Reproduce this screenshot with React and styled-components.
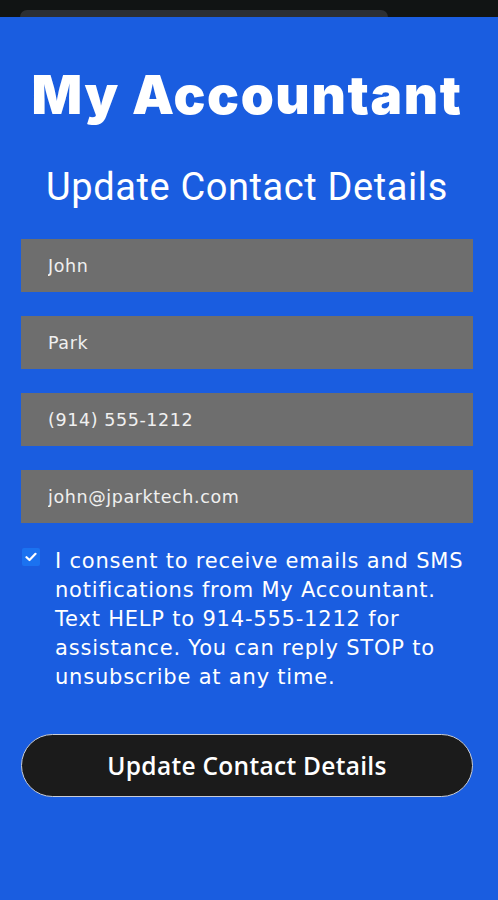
import React, { useState } from "react";
import styled, { createGlobalStyle } from "styled-components";

const Global = createGlobalStyle`
  html, body { margin: 0; padding: 0; background: #1a5de0; }
  * { box-sizing: border-box; }
`;

const Page = styled.div`
  min-height: 900px;
  background: #1a5de0;
  display: flex;
  flex-direction: column;
`;

const Chrome = styled.div`
  height: 17px;
  background: #111414;
  padding: 10px 0 0 20px;
  display: flex;
`;

const ChromeTab = styled.div`
  width: 368px;
  height: 7px;
  background: #2c2f33;
  border-radius: 14px 14px 0 0;
`;

const Main = styled.main`
  display: flex;
  flex-direction: column;
  padding: 0 25px 0 21px;
`;

const Brand = styled.h1`
  margin: 46px 0 0;
  text-align: center;
  font-family: "Inter", "Noto Sans", sans-serif;
  font-weight: 900;
  font-size: 53px;
  line-height: 64px;
  color: #ffffff;
  letter-spacing: 1.6px;
`;

const Title = styled.h2`
  margin: 38px 0 0;
  text-align: center;
  font-family: "Roboto", sans-serif;
  font-weight: 400;
  font-size: 38px;
  line-height: 44px;
  color: #ffffff;
  letter-spacing: 0.6px;
`;

const Form = styled.form`
  display: flex;
  flex-direction: column;
  gap: 24px;
  margin-top: 30px;
`;

const Field = styled.input`
  height: 53px;
  width: 100%;
  border: none;
  outline: none;
  background: #6e6e6e;
  color: #f0f0f0;
  padding: 0 0 0 27px;
  font-family: "DejaVu Sans", sans-serif;
  font-size: 17.5px;
  letter-spacing: 0.6px;
`;

const Consent = styled.label`
  display: flex;
  gap: 15px;
  align-items: flex-start;
  margin-top: 1px;
  padding-left: 1px;
  cursor: pointer;
`;

const Box = styled.span`
  flex: none;
  width: 18px;
  height: 18px;
  border-radius: 2px;
  background: ${(p) => (p.$checked ? "#1b72f0" : "#fff")};
  display: flex;
  align-items: center;
  justify-content: center;
`;

const ConsentText = styled.span`
  font-family: "DejaVu Sans", sans-serif;
  font-size: 21px;
  line-height: 29px;
  color: #ffffff;
  margin-top: -1px;
  letter-spacing: 0.8px;
`;

const Submit = styled.button`
  margin-top: 18px;
  height: 63px;
  width: 100%;
  border-radius: 32px;
  background: #1b1b1b;
  border: 1px solid #c9cdd6;
  color: #ffffff;
  font-family: "Open Sans", "Lato", sans-serif;
  font-weight: 600;
  font-size: 24.5px;
  letter-spacing: 0.3px;
  cursor: pointer;
`;

export default function App() {
  const [checked, setChecked] = useState(true);
  return (
    <Page>
      <Global />
      <Chrome>
        <ChromeTab />
      </Chrome>
      <Main>
        <Brand>My Accountant</Brand>
        <Title>Update Contact Details</Title>
        <Form onSubmit={(e) => e.preventDefault()}>
          <Field defaultValue="John" />
          <Field defaultValue="Park" />
          <Field defaultValue="(914) 555-1212" />
          <Field defaultValue="john@jparktech.com" />
          <Consent onClick={() => setChecked((c) => !c)}>
            <Box $checked={checked}>
              {checked && (
                <svg width="12" height="10" viewBox="0 0 12 10">
                  <path d="M1.5 5.2 L4.5 8 L10.5 1.8" fill="none" stroke="#fff" strokeWidth="2.2" strokeLinecap="round" strokeLinejoin="round" />
                </svg>
              )}
            </Box>
            <ConsentText>
              I consent to receive emails and SMS
              <br />
              notifications from My Accountant.
              <br />
              Text HELP to 914-555-1212 for
              <br />
              assistance. You can reply STOP to
              <br />
              unsubscribe at any time.
            </ConsentText>
          </Consent>
          <Submit type="submit">Update Contact Details</Submit>
        </Form>
      </Main>
    </Page>
  );
}
